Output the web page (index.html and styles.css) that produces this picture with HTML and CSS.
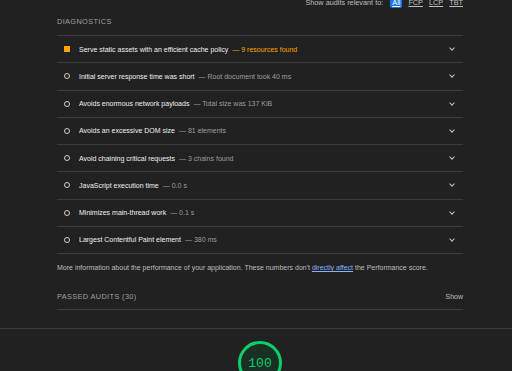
FILE: index.html
```html
<!DOCTYPE html>
<html lang="en">
<head>
    <meta charset="UTF-8">
    <meta name="viewport" content="width=device-width, initial-scale=1.0">
    <title>Lighthouse Report</title>
    <link rel="stylesheet" href="styles.css">
</head>
<body>
    <div class="report">
        <div class="filter-bar">
            <span class="filter-label">Show audits relevant to:</span>
            <span class="chip chip-active">All</span>
            <span class="chip">FCP</span>
            <span class="chip">LCP</span>
            <span class="chip">TBT</span>
        </div>

        <div class="group-title">Diagnostics</div>

        <div class="audits">
            <div class="audit">
                <span class="icon icon-warn"></span>
                <span class="audit-title">Serve static assets with an efficient cache policy</span>
                <span class="audit-value value-warn">— 9 resources found</span>
                <span class="chevron"></span>
            </div>
            <div class="audit">
                <span class="icon icon-info"></span>
                <span class="audit-title">Initial server response time was short</span>
                <span class="audit-value">— Root document took 40 ms</span>
                <span class="chevron"></span>
            </div>
            <div class="audit">
                <span class="icon icon-info"></span>
                <span class="audit-title">Avoids enormous network payloads</span>
                <span class="audit-value">— Total size was 137 KiB</span>
                <span class="chevron"></span>
            </div>
            <div class="audit">
                <span class="icon icon-info"></span>
                <span class="audit-title">Avoids an excessive DOM size</span>
                <span class="audit-value">— 81 elements</span>
                <span class="chevron"></span>
            </div>
            <div class="audit">
                <span class="icon icon-info"></span>
                <span class="audit-title">Avoid chaining critical requests</span>
                <span class="audit-value">— 3 chains found</span>
                <span class="chevron"></span>
            </div>
            <div class="audit">
                <span class="icon icon-info"></span>
                <span class="audit-title">JavaScript execution time</span>
                <span class="audit-value">— 0.0 s</span>
                <span class="chevron"></span>
            </div>
            <div class="audit">
                <span class="icon icon-info"></span>
                <span class="audit-title">Minimizes main-thread work</span>
                <span class="audit-value">— 0.1 s</span>
                <span class="chevron"></span>
            </div>
            <div class="audit">
                <span class="icon icon-info"></span>
                <span class="audit-title">Largest Contentful Paint element</span>
                <span class="audit-value">— 380 ms</span>
                <span class="chevron"></span>
            </div>
        </div>

        <p class="group-desc">More information about the performance of your application. These numbers don't <a href="#">directly affect</a> the Performance score.</p>

        <div class="passed">
            <span class="group-title-inline">Passed audits (30)</span>
            <span class="show-link">Show</span>
        </div>
    </div>

    <div class="category">
        <div class="gauge">100</div>
    </div>
</body>
</html>
```

FILE: styles.css
```css
html, body {
    margin: 0;
    background-color: #212121;
}

body {
    font-family: 'Liberation Sans', Arial, sans-serif;
    color: #e8e8e8;
    font-size: 7px;
}

.report {
    width: 406px;
    margin: -4px 0 0 57px;
}

.filter-bar {
    display: flex;
    justify-content: flex-end;
    align-items: center;
    gap: 6px;
    height: 12px;
    font-size: 7.3px;
    color: #bdbdbd;
}

.filter-label {
    margin-right: 1px;
}

.chip {
    padding: 1px 0;
    text-decoration: underline;
    color: #bdbdbd;
}

.chip-active {
    background-color: #1a73e8;
    color: #fff;
    border-radius: 2px;
    padding: 1px 2px;
}

.group-title {
    text-transform: uppercase;
    letter-spacing: 0.4px;
    color: #a0a0a0;
    font-size: 7.3px;
    padding: 9px 0 9px;
}

.audits {
    border-top: 1px solid #3b3b3b;
}

.audit {
    display: flex;
    align-items: center;
    height: 26.25px;
    border-bottom: 1px solid #3b3b3b;
    padding-left: 7px;
}

.icon {
    width: 6px;
    height: 6px;
    margin-right: 9px;
    box-sizing: border-box;
}

.icon-warn {
    background-color: #ffa400;
}

.icon-info {
    border: 1.3px solid #d0d0d0;
    border-radius: 50%;
}

.audit-title {
    color: #f0f0f0;
    margin-right: 4px;
}

.audit-value {
    color: #9e9e9e;
}

.value-warn {
    color: #ffa400;
}

.chevron {
    margin-left: auto;
    margin-right: 9px;
    width: 3px;
    height: 3px;
    border-right: 1.3px solid #c0c0c0;
    border-bottom: 1.3px solid #c0c0c0;
    transform: rotate(45deg);
    margin-top: -2px;
}

.group-desc {
    margin: 0;
    padding: 10px 0 0;
    color: #bdbdbd;
}

.group-desc a {
    color: #8ab4f8;
}

.passed {
    display: flex;
    justify-content: space-between;
    align-items: center;
    margin-top: 21px;
    padding-bottom: 8px;
    border-bottom: 1px solid #3b3b3b;
    color: #a0a0a0;
}

.group-title-inline {
    text-transform: uppercase;
    letter-spacing: 0.4px;
    font-size: 7.3px;
}

.show-link {
    color: #bdbdbd;
}

.category {
    margin-top: 18px;
    border-top: 1px solid #3b3b3b;
    display: flex;
    justify-content: center;
    padding-top: 12px;
}

.gauge {
    width: 38px;
    height: 38px;
    border: 3px solid #0cce6b;
    border-radius: 50%;
    background-color: #1b3024;
    color: #0cce6b;
    font-family: 'Liberation Mono', monospace;
    font-size: 13px;
    display: flex;
    align-items: center;
    justify-content: center;
    margin-left: 8px;
}
```
